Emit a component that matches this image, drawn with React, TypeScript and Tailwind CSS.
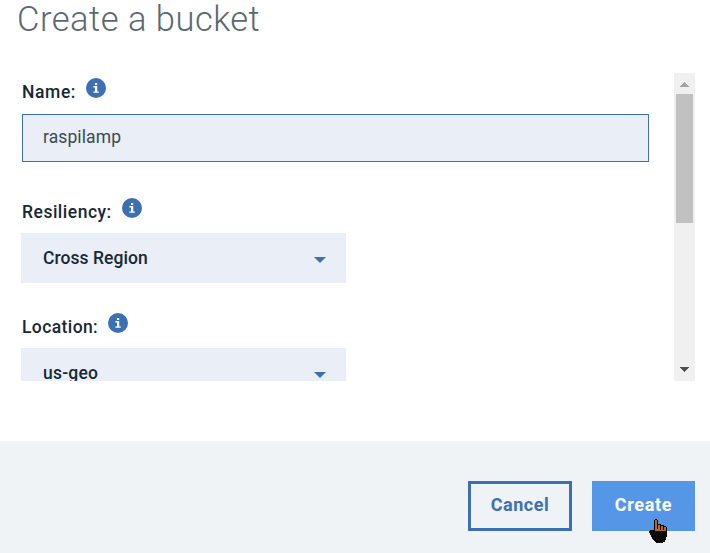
import React from "react";

function InfoIcon() {
  return (
    <svg width="20" height="20" viewBox="0 0 20 20" className="block shrink-0">
      <circle cx="10" cy="10" r="10" fill="#3d70b2" />
      <path d="M9 5h2.2v2H9zM7.4 8.1h3.8v5.3h1.6v1.4H7.4v-1.4H9V9.5H7.4z" fill="#fff" />
    </svg>
  );
}

function Label({ text, tracking }: { text: string; tracking: string }) {
  return (
    <div className="flex h-[26px] shrink-0 items-start gap-[10px]">
      <span className={`pt-[3px] text-[17.5px] leading-[22px] font-medium whitespace-nowrap ${tracking}`}>{text}</span>
      <InfoIcon />
    </div>
  );
}

function Select({ value, tracking }: { value: string; tracking: string }) {
  return (
    <div className="-ml-px flex h-[50px] w-[325px] shrink-0 items-center justify-between bg-[#eaeef6] pr-5 pl-[22px]">
      <span className={`text-[17.5px] leading-6 font-medium whitespace-nowrap ${tracking}`}>{value}</span>
      <svg width="12" height="6" viewBox="0 0 12 6" className="mt-[4px]">
        <path d="M0 0h12L6 6z" fill="#3d70b2" />
      </svg>
    </div>
  );
}

function Scrollbar() {
  return (
    <div className="flex w-[21px] flex-col items-center bg-[#f0f0f0]">
      <div className="flex h-[21px] items-center">
        <svg width="9" height="5" viewBox="0 0 9 5" className="mt-[2px]" shapeRendering="crispEdges">
          <path d="M4 0h1v1h1v1h1v1h1v1h1v1H0V4h1V3h1V2h1V1h1z" fill="#a3a3a3" />
        </svg>
      </div>
      <div className="h-[129px] w-[17px] bg-[#c1c1c1]" />
      <svg width="9" height="5" viewBox="0 0 9 5" className="mt-auto mb-[9px]" shapeRendering="crispEdges">
        <path d="M0 0h9v1H8v1H7v1H6v1H5v1H4V4H3V3H2V2H1V1H0z" fill="#505050" />
      </svg>
    </div>
  );
}

function HandCursor() {
  return (
    <svg width="18" height="24" viewBox="0 0 18 24" className="absolute top-[38px] left-[57px]" shapeRendering="crispEdges">
      <path d="M6 0h2v1h1v4h3v1h3v1h2v1h1v10h-1v3h-1v2h-2v1H7v-1H6v-1H5v-1H4v-1H3v-2H2v-2H1v-2H0v-2h1v-1h4V1h1z" fill="#0b0a09" />
      <path d="M6 1h2v5h1v5H6zM9 6h2v5H9zM12 7h2v4h-2zM15 8h2v3h-2z" fill="#b56a17" />
      <path d="M6 11h11v1H6z" fill="#b56a17" />
      <path d="M8 6h1v4H8zM11 7h1v3h-1zM14 7h1v4h-1z" fill="#0b0a09" />
    </svg>
  );
}

export default function App() {
  return (
    <div className="flex h-[553px] w-[710px] flex-col overflow-hidden bg-white font-['Roboto','Liberation_Sans',sans-serif] text-[#152935]">
      <h1 className="h-[73px] shrink-0 pl-[17px] text-[34.5px] leading-[39px] font-light tracking-[0.5px] whitespace-nowrap text-[#5a6872]">
        Create a bucket
      </h1>
      <main className="flex h-[308px] w-[695px] shrink-0 justify-between overflow-hidden">
        <div className="flex flex-col pt-[5px] pl-[22px]">
          <Label text="Name:" tracking="tracking-[0.6px]" />
          <div className="mt-[10px] flex h-[48px] w-[627px] shrink-0 items-center border border-[#3d70b2] bg-[#eaeef6] pb-[2px] pl-5 text-[17.5px] tracking-[0.1px] text-[#394b54]">
            raspilamp
          </div>
          <div className="mt-[36px] shrink-0">
            <Label text="Resiliency:" tracking="tracking-[0.5px]" />
          </div>
          <div className="mt-[9px] shrink-0">
            <Select value="Cross Region" tracking="tracking-[0.05px]" />
          </div>
          <div className="mt-[30px] shrink-0">
            <Label text="Location:" tracking="tracking-[0.4px]" />
          </div>
          <div className="mt-[9px] shrink-0">
            <Select value="us-geo" tracking="tracking-[0.2px]" />
          </div>
        </div>
        <Scrollbar />
      </main>
      <footer className="mt-[60px] flex h-[112px] shrink-0 justify-end gap-5 bg-[#eff3f6] pt-10 pr-[15px]">
        <button className="h-[50px] w-[104px] border-[3px] border-[#3d70b2] pb-[3px] text-[18px] font-bold tracking-[0.5px] text-[#3d70b2]">Cancel</button>
        <button className="relative h-[50px] w-[103px] bg-[#5596e6] pb-[3px] text-[18px] font-bold tracking-[0.7px] text-white">
          Create
          <HandCursor />
        </button>
      </footer>
    </div>
  );
}
